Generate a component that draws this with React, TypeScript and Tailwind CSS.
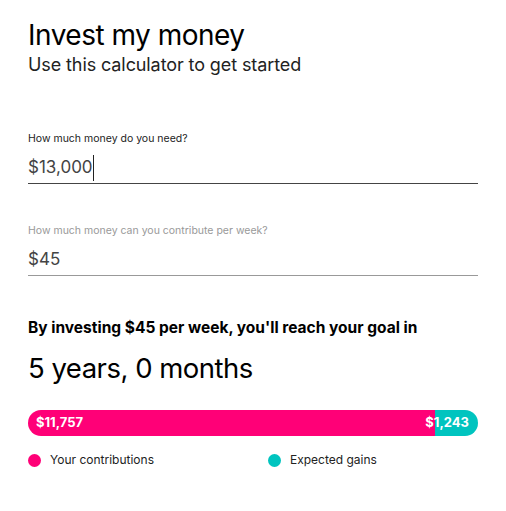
export default function App() {
  const contributions = 11757;
  const gains = 1243;
  const pct = (contributions / (contributions + gains)) * 100;

  return (
    <div className="min-h-screen bg-white px-[28px] pt-[17px] text-black" style={{ fontFamily: "Inter, 'Noto Sans', sans-serif" }}>
      <h1 className="text-[28px] leading-[36px] font-normal tracking-[-0.5px]">Invest my money</h1>
      <p className="text-[18px] leading-[24px] text-[#222] tracking-[-0.1px]">Use this calculator to get started</p>

      <div className="mt-[55px] w-[450px]">
        <label className="block text-[10.5px] leading-[14px] text-[#222]">How much money do you need?</label>
        <div className="mt-[6px] flex h-[32px] items-center border-b border-[#444]">
          <span className="text-[17px] text-[#444]">$13,000</span>
          <span className="h-[26px] w-px bg-[#222]" />
        </div>
      </div>

      <div className="mt-[40px] w-[450px]">
        <label className="block text-[10.5px] leading-[14px] text-[#999]">How much money can you contribute per week?</label>
        <div className="mt-[6px] flex h-[32px] items-center border-b border-[#999]">
          <span className="text-[17px] text-[#444]">$45</span>
        </div>
      </div>

      <p className="mt-[42px] text-[15.5px] leading-[20px] font-bold">
        By investing $45 per week, you'll reach your goal in
      </p>
      <p className="mt-[12px] text-[27.5px] leading-[36px] tracking-[-0.5px]">5 years, 0 months</p>

      <div className="mt-[24px] flex h-[26px] w-[450px] overflow-hidden rounded-full text-[13px] font-bold text-white">
        <div className="flex shrink-0 items-center bg-[#ff0077] pl-[8px]" style={{ width: `${pct}%` }}>
          $11,757
        </div>
        <div className="flex min-w-0 flex-1 items-center justify-end whitespace-nowrap bg-[#00c4bf] pr-[9px]">$1,243</div>
      </div>

      <div className="mt-[15px] flex text-[12px] text-[#222]">
        <div className="flex w-[240px] items-center gap-[9px]">
          <span className="h-[13px] w-[13px] rounded-full bg-[#ff0077]" />
          Your contributions
        </div>
        <div className="flex items-center gap-[9px]">
          <span className="h-[13px] w-[13px] rounded-full bg-[#00c4bf]" />
          Expected gains
        </div>
      </div>
    </div>
  );
}
